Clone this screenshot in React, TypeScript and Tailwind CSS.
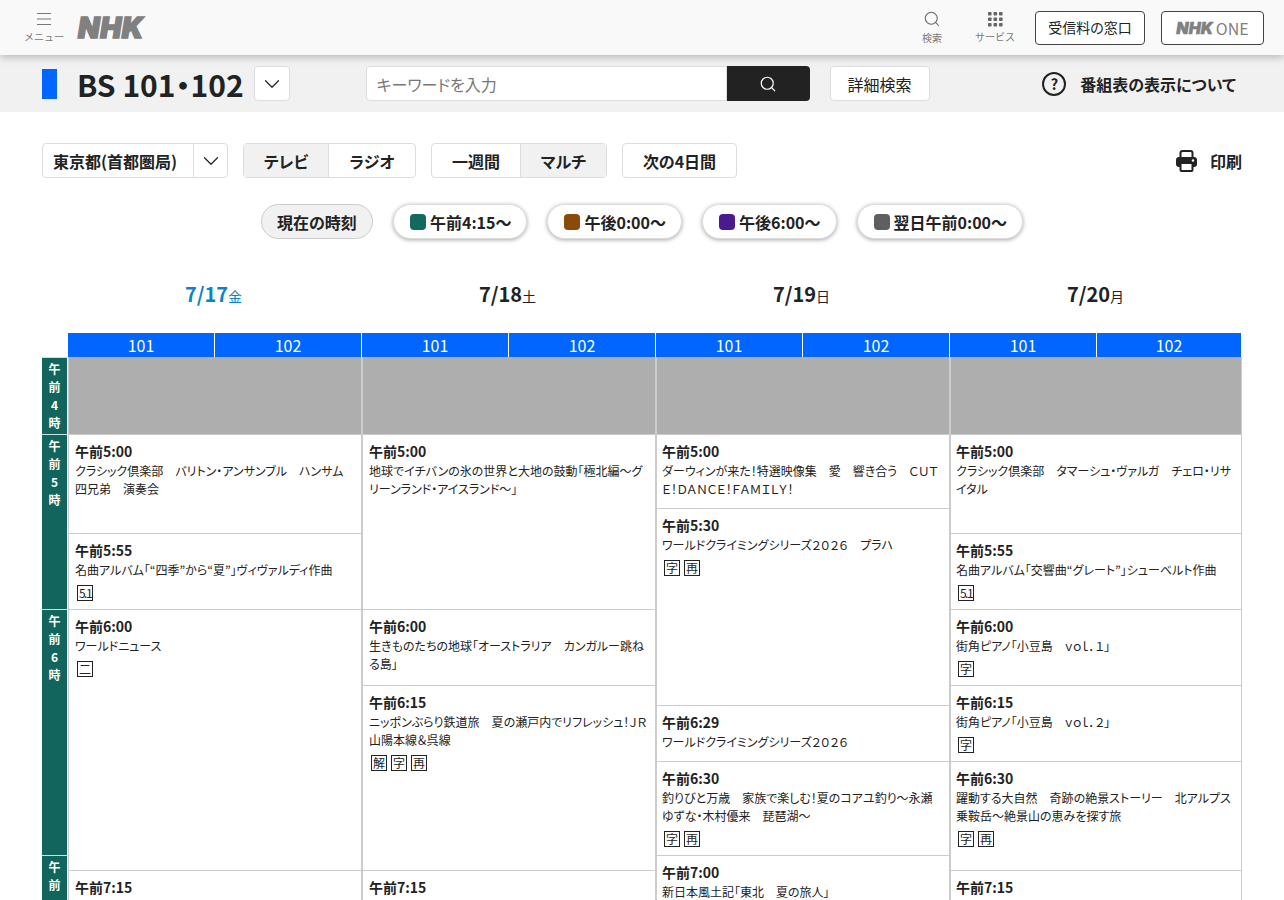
import { ChevronDown, Search } from "lucide-react"

type Program = { h: number; time?: string; title?: string; flags?: string[] }

const font = { fontFamily: '"Noto Sans CJK JP", sans-serif' }

const days = [
  { date: "7/17", wd: "金", today: true },
  { date: "7/18", wd: "土" },
  { date: "7/19", wd: "日" },
  { date: "7/20", wd: "月" },
]

const hours = [
  { label: ["午", "前", "4", "時"], h: 77 },
  { label: ["午", "前", "5", "時"], h: 175 },
  { label: ["午", "前", "6", "時"], h: 246 },
  { label: ["午", "前"], h: 45 },
]

const columns: Program[][] = [
  [
    { h: 77 },
    { h: 99, time: "午前5:00", title: "クラシック倶楽部　バリトン・アンサンブル　ハンサム四兄弟　演奏会" },
    { h: 76, time: "午前5:55", title: "名曲アルバム「“四季”から“夏”」ヴィヴァルディ作曲", flags: ["5.1"] },
    { h: 261, time: "午前6:00", title: "ワールドニュース", flags: ["二"] },
    { h: 30, time: "午前7:15" },
  ],
  [
    { h: 77 },
    { h: 175, time: "午前5:00", title: "地球でイチバンの氷の世界と大地の鼓動「極北編〜グリーンランド・アイスランド〜」" },
    { h: 76, time: "午前6:00", title: "生きものたちの地球「オーストラリア　カンガルー跳ねる島」" },
    { h: 185, time: "午前6:15", title: "ニッポンぶらり鉄道旅　夏の瀬戸内でリフレッシュ！ＪＲ山陽本線＆呉線", flags: ["解", "字", "再"] },
    { h: 30, time: "午前7:15" },
  ],
  [
    { h: 77 },
    { h: 74, time: "午前5:00", title: "ダーウィンが来た！特選映像集　愛　響き合う　ＣＵＴＥ！ＤＡＮＣＥ！ＦＡＭＩＬＹ！" },
    { h: 197, time: "午前5:30", title: "ワールドクライミングシリーズ２０２６　プラハ", flags: ["字", "再"] },
    { h: 56, time: "午前6:29", title: "ワールドクライミングシリーズ２０２６" },
    { h: 94, time: "午前6:30", title: "釣りびと万歳　家族で楽しむ！夏のコアユ釣り〜永瀬ゆずな・木村優来　琵琶湖〜", flags: ["字", "再"] },
    { h: 45, time: "午前7:00", title: "新日本風土記「東北　夏の旅人」" },
  ],
  [
    { h: 77 },
    { h: 99, time: "午前5:00", title: "クラシック倶楽部　タマーシュ・ヴァルガ　チェロ・リサイタル" },
    { h: 76, time: "午前5:55", title: "名曲アルバム「交響曲“グレート”」シューベルト作曲", flags: ["5.1"] },
    { h: 76, time: "午前6:00", title: "街角ピアノ「小豆島　ｖｏｌ．１」", flags: ["字"] },
    { h: 76, time: "午前6:15", title: "街角ピアノ「小豆島　ｖｏｌ．２」", flags: ["字"] },
    { h: 109, time: "午前6:30", title: "躍動する大自然　奇跡の絶景ストーリー　北アルプス乗鞍岳〜絶景山の恵みを探す旅", flags: ["字", "再"] },
    { h: 30, time: "午前7:15" },
  ],
]

const chips = [
  { label: "午前4:15〜", color: "bg-[#12695f]" },
  { label: "午後0:00〜", color: "bg-[#8a4b08]" },
  { label: "午後6:00〜", color: "bg-[#4b1a8c]" },
  { label: "翌日午前0:00〜", color: "bg-[#5f5f5f]" },
]

function Flag({ text }: { text: string }) {
  return (
    <span
      className={`flex h-4 w-4 items-center justify-center border border-[#222] text-[12px] leading-none text-[#222] [font-feature-settings:normal] ${
        text === "5.1" ? "tracking-[-1.5px]" : ""
      }`}
    >
      {text}
    </span>
  )
}

function Cell({ p, tight }: { p: Program; tight: boolean }) {
  if (!p.time) {
    return <div className="shrink-0 border-x border-[#ccc] bg-[#aeaeae]" style={{ height: p.h }} />
  }
  return (
    <div
      className={`shrink-0 overflow-hidden border-x border-t border-[#ccc] bg-white pt-[6px] pr-[6px] ${tight ? "pl-[5px]" : "pl-[6px]"}`}
      style={{ height: p.h }}
    >
      <div className="text-[14px] leading-[21px] font-bold text-[#222]">{p.time}</div>
      {p.title && <div className="text-[12px] leading-[18px] text-[#222]">{p.title}</div>}
      {p.flags && (
        <div className="mt-[6px] ml-[2px] flex gap-1">
          {p.flags.map((f) => (
            <Flag key={f} text={f} />
          ))}
        </div>
      )}
    </div>
  )
}

function Chevron() {
  return <ChevronDown className="h-[26px] w-[26px] text-[#222]" strokeWidth={1.1} />
}

export default function App() {
  return (
    <div className="h-screen overflow-hidden bg-white text-[#222] [font-feature-settings:'palt']" style={font}>
      <div className="relative z-10 flex h-[55px] items-center justify-between bg-[#f9f9f9] pr-5 pl-6 shadow-[0_2px_8px_rgba(0,0,0,0.25)]">
        <div className="flex items-center gap-[14px]">
          <div className="flex flex-col items-center text-[#777]">
            <svg width="16" height="16" viewBox="0 0 16 16" fill="none" stroke="#777" strokeWidth="1.2">
              <path d="M1 2.500h14M1 8h14M1 13.500h14" />
            </svg>
            <span className="mt-[3px] text-[10px] leading-[14px] [font-feature-settings:normal]">メニュー</span>
          </div>
          <span
            className="text-[28px] leading-none font-black tracking-[0.6px] text-[#808080] italic"
            style={{ fontFamily: "Inter, sans-serif", WebkitTextStroke: "1.5px #808080" }}
          >
            NHK
          </span>
        </div>
        <div className="flex items-center">
          <div className="mr-[33px] flex flex-col items-center text-[#666]">
            <Search className="h-[18px] w-[18px]" strokeWidth={1.4} />
            <span className="mt-[3px] text-[10px] leading-[14px] text-[#777] [font-feature-settings:normal]">検索</span>
          </div>
          <div className="mr-[20px] flex flex-col items-center text-[#777]">
            <svg width="16" height="16" viewBox="0 0 16 16" fill="#666">
              {[1, 6.5, 12].flatMap((x) =>
                [1, 6.5, 12].map((y) => <rect key={`${x}-${y}`} x={x} y={y} width="3.6" height="3.6" rx="0.8" />),
              )}
            </svg>
            <span className="mt-[3px] text-[10px] leading-[14px] [font-feature-settings:normal]">サービス</span>
          </div>
          <div className="flex h-[34px] w-[110px] items-center justify-center rounded border border-[#444] bg-white text-[14px]">受信料の窓口</div>
          <div className="ml-4 flex h-[34px] w-[103px] items-center justify-center gap-[3px] rounded border border-[#444] bg-white text-[#808080]">
            <span className="text-[16px] leading-none font-black italic" style={{ fontFamily: "Inter, sans-serif", WebkitTextStroke: "0.5px #808080" }}>
              NHK
            </span>
            <span className="text-[16px] leading-none">ONE</span>
          </div>
        </div>
      </div>

      <div className="flex h-[57px] items-center bg-[#f1f1f1] pr-[48px] pl-[42px]">
        <div className="h-[30px] w-[15px] bg-[#0066ff]" />
        <h1 className="ml-5 text-[30px] leading-none font-bold">BS 101・102</h1>
        <div className="ml-[10px] flex h-[35px] w-[36px] items-center justify-center rounded border border-[#ddd] bg-white">
          <Chevron />
        </div>
        <div className="ml-[76px] flex h-[35px] w-[444px]">
          <div className="flex flex-1 items-center rounded-l border border-[#ddd] bg-white px-[10px] text-[16px] text-[#777]">キーワードを入力</div>
          <div className="flex w-[83px] items-center justify-center rounded-r bg-[#222]">
            <Search className="h-[18px] w-[18px] text-white" strokeWidth={1.6} />
          </div>
        </div>
        <div className="ml-5 flex h-[35px] w-[100px] items-center justify-center rounded border border-[#ddd] bg-white text-[16px]">詳細検索</div>
        <div className="ml-auto flex items-center gap-[14px]">
          <span className="flex h-6 w-6 items-center justify-center rounded-full border-2 border-[#222] text-[15px] leading-none font-bold">?</span>
          <span className="text-[16px] font-bold">番組表の表示について</span>
        </div>
      </div>

      <div className="px-[42px]">
        <div className="mt-[31px] flex h-[35px] items-stretch text-[16px] font-bold">
          <div className="flex w-[186px] items-center rounded border border-[#ddd]">
            <span className="flex-1 pl-[10px]">東京都(首都圏局)</span>
            <span className="flex h-full w-[34px] items-center justify-center border-l border-[#ddd]">
              <Chevron />
            </span>
          </div>
          <div className="ml-[15px] flex w-[173px] rounded border border-[#ddd]">
            <span className="flex w-[85px] items-center justify-center border-r border-[#ddd] bg-[#f1f1f1]">テレビ</span>
            <span className="flex flex-1 items-center justify-center">ラジオ</span>
          </div>
          <div className="ml-[15px] flex w-[176px] rounded border border-[#ddd]">
            <span className="flex w-[89px] items-center justify-center border-r border-[#ddd]">一週間</span>
            <span className="flex flex-1 items-center justify-center bg-[#f1f1f1]">マルチ</span>
          </div>
          <div className="ml-[15px] flex w-[115px] items-center justify-center rounded border border-[#ddd]">次の4日間</div>
          <div className="ml-auto flex items-center gap-[13px]">
            <svg width="21" height="22" viewBox="0 0 21 22">
              <rect x="4.500" y="1" width="12" height="9" rx="2" fill="white" stroke="#222" strokeWidth="2" />
              <rect x="0" y="7" width="21" height="10" rx="3" fill="#222" />
              <rect x="4.500" y="13" width="12" height="8" rx="1" fill="white" stroke="#222" strokeWidth="2" />
              <circle cx="17" cy="10.500" r="1.200" fill="white" />
            </svg>
            <span>印刷</span>
          </div>
        </div>

        <div className="mt-[26px] flex h-[35px] justify-center gap-5 text-[16px] leading-none font-bold">
          <div className="flex w-[112px] items-center justify-center rounded-full border border-[#ccc] bg-[#f1f1f1]">現在の時刻</div>
          {chips.map((c) => (
            <div key={c.label} className="flex items-center gap-1 rounded-full border border-[#ddd] bg-white pr-[15px] pl-4 shadow-[0_1px_4px_rgba(0,0,0,0.35)]">
              <span className={`h-4 w-4 rounded-sm ${c.color}`} />
              {c.label}
            </div>
          ))}
        </div>

        <div className="ml-[26px] grid h-[94px] grid-cols-[294px_294px_294px_1fr]">
          {days.map((d) => (
            <div key={d.date} className={`pt-10 text-center ${d.wd === "月" ? "pr-px" : "pr-[3px]"} ${d.today ? "text-[#0a84c8]" : "text-[#222]"}`}>
              <span className="text-[20px] leading-[30px] font-bold">{d.date}</span>
              <span className="text-[14px]">{d.wd}</span>
            </div>
          ))}
        </div>

        <div className="flex">
          <div className="w-[26px] shrink-0 pt-6 pr-px">
            {hours.map((h, i) => (
              <div
                key={i}
                className="flex flex-col items-center border-t border-[#cfe0de] bg-[#12655c] pt-[2px] text-[12px] leading-[18px] font-bold text-white"
                style={{ height: h.h }}
              >
                {h.label.map((c, j) => (
                  <span key={j}>{c}</span>
                ))}
              </div>
            ))}
          </div>
          <div className="grid flex-1 grid-cols-[294px_294px_294px_1fr]">
            {columns.map((col, i) => (
              <div key={i}>
                <div className="grid h-6 grid-cols-[147px_1fr] border-r border-white bg-[#0066ff] text-center text-[16px] leading-6 text-white">
                  <span className="border-r border-white">101</span>
                  <span>102</span>
                </div>
                {col.map((p, j) => (
                  <Cell key={j} p={p} tight={i >= 2} />
                ))}
              </div>
            ))}
          </div>
        </div>
      </div>
    </div>
  )
}
